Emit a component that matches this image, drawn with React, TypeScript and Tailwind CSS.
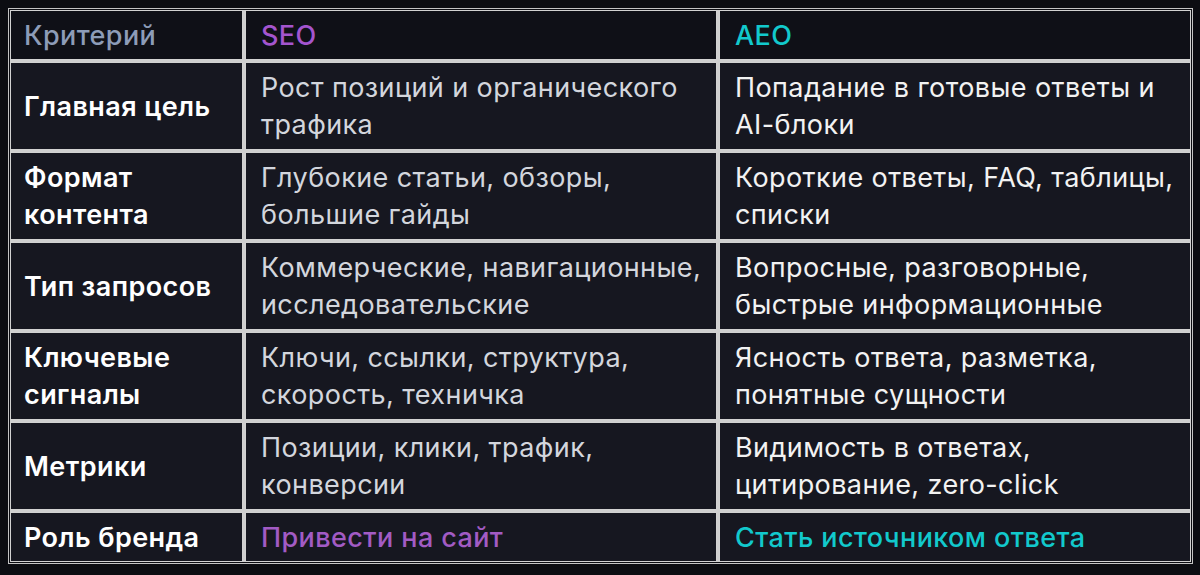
import React from 'react';

type Row = {
  label: string[];
  seo: string[];
  aeo: string[];
  accent?: boolean;
};

// line breaks follow the reference table
const rows: Row[] = [
  {
    label: ['Главная цель'],
    seo: ['Рост позиций и органического', 'трафика'],
    aeo: ['Попадание в готовые ответы и', 'AI-блоки'],
  },
  {
    label: ['Формат', 'контента'],
    seo: ['Глубокие статьи, обзоры,', 'большие гайды'],
    aeo: ['Короткие ответы, FAQ, таблицы,', 'списки'],
  },
  {
    label: ['Тип запросов'],
    seo: ['Коммерческие, навигационные,', 'исследовательские'],
    aeo: ['Вопросные, разговорные,', 'быстрые информационные'],
  },
  {
    label: ['Ключевые', 'сигналы'],
    seo: ['Ключи, ссылки, структура,', 'скорость, техничка'],
    aeo: ['Ясность ответа, разметка,', 'понятные сущности'],
  },
  {
    label: ['Метрики'],
    seo: ['Позиции, клики, трафик,', 'конверсии'],
    aeo: ['Видимость в ответах,', 'цитирование, zero-click'],
  },
  {
    label: ['Роль бренда'],
    seo: ['Привести на сайт'],
    aeo: ['Стать источником ответа'],
    accent: true,
  },
];

const cell =
  'flex flex-col justify-center border border-[#d2d2d2] whitespace-nowrap text-[27px] leading-[37px] tracking-[0.015em]';

const Lines = ({ lines }: { lines: string[] }) => (
  <>
    {lines.map((l) => (
      <span key={l}>{l}</span>
    ))}
  </>
);

const App = () => {
  return (
    <div
      className="min-h-[575px] w-full bg-[#0c0d12] pl-[8px] pt-[8px]"
      style={{ fontFamily: 'Inter, "Noto Sans", sans-serif' }}
    >
      <div className="w-[1185px] border border-[#c4c4c4] bg-[#0c0d12] p-px">
        <div className="grid grid-cols-[233px_472px_472px] grid-rows-[50px_88px_88px_88px_88px_88px_50px] gap-[2px] bg-[#cfcfcf]">
          {/* header */}
          <div className={`${cell} bg-[#0f1017] pl-[13px] font-medium text-[#8d9cb8]`}>Критерий</div>
          <div className={`${cell} bg-[#0f1017] pl-[15px] font-medium text-[#a455cf]`}>SEO</div>
          <div className={`${cell} bg-[#0f1017] pl-[15px] font-medium text-[#12c9cc]`}>AEO</div>

          {rows.map((row) => (
            <React.Fragment key={row.label[0]}>
              <div className={`${cell} bg-[#161720] pl-[13px] font-semibold text-white`}>
                <Lines lines={row.label} />
              </div>
              <div
                className={`${cell} bg-[#161720] pl-[15px] ${
                  row.accent ? 'font-medium text-[#a25bc4]' : 'text-[#d3d6dd]'
                }`}
              >
                <Lines lines={row.seo} />
              </div>
              <div
                className={`${cell} bg-[#161720] pl-[15px] ${
                  row.accent ? 'font-medium text-[#12c9cc]' : 'text-[#f2f2f2]'
                }`}
              >
                <Lines lines={row.aeo} />
              </div>
            </React.Fragment>
          ))}
        </div>
      </div>
    </div>
  );
};

export default App;
